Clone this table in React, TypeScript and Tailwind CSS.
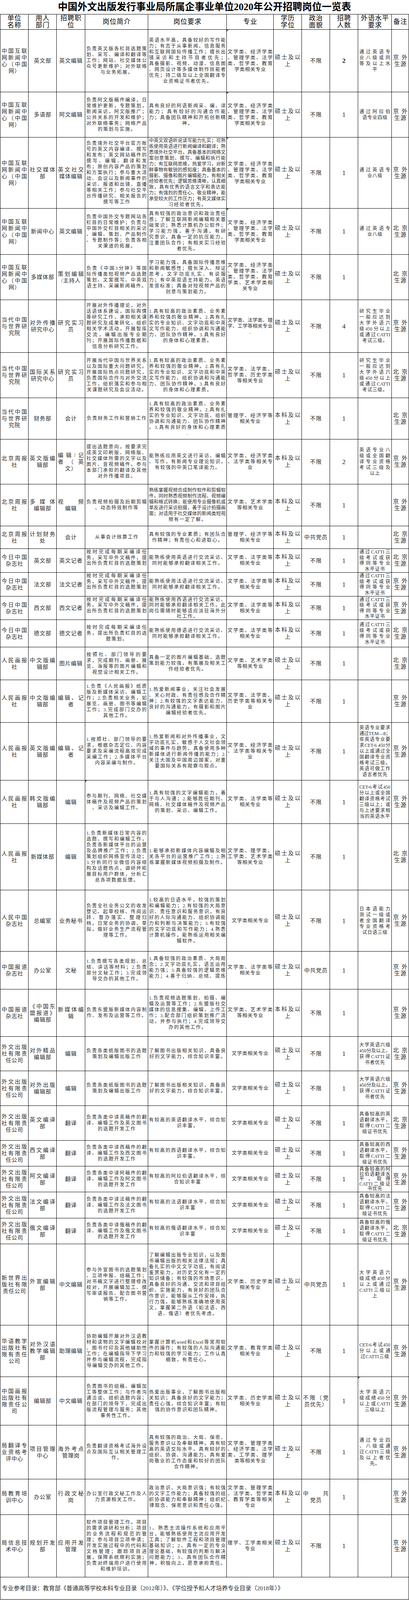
import React from "react";

// The page is photographed in a 4096px-tall window, so every height below is the
// reference height times 4096/4384.
type Col = { w: string; size: string; lh: number; gap: string; pad: string };

const cols: Col[] = [
  { w: "w-[72px]", size: "text-[14px]", lh: 17, gap: "gap-[1px]", pad: "px-[3px]" }, // 单位名称
  { w: "w-[72px]", size: "text-[14px]", lh: 17, gap: "gap-[1px]", pad: "px-[3px]" }, // 用人部门
  { w: "w-[73px]", size: "text-[14px]", lh: 17, gap: "gap-[1px]", pad: "px-[3px]" }, // 招聘职位
  { w: "w-[161px]", size: "text-[12px]", lh: 15, gap: "gap-[2px]", pad: "px-[3px]" }, // 岗位简介
  { w: "w-[201px]", size: "text-[12px]", lh: 15, gap: "gap-[2px]", pad: "px-[2px]" }, // 岗位要求
  { w: "w-[120px]", size: "text-[12.5px]", lh: 15, gap: "gap-[1px]", pad: "px-[2px]" }, // 专业
  { w: "w-[72px]", size: "text-[14px]", lh: 18, gap: "gap-[1px]", pad: "px-[3px]" }, // 学历学位
  { w: "w-[72px]", size: "text-[14px]", lh: 17, gap: "gap-[1px]", pad: "px-[3px]" }, // 政治面貌
  { w: "w-[72px]", size: "text-[17px]", lh: 17, gap: "gap-[1px]", pad: "px-[3px]" }, // 招聘人数
  { w: "w-[86px]", size: "text-[12px]", lh: 15, gap: "gap-[1px]", pad: "px-[3px]" }, // 外语水平要求
  { w: "flex-1", size: "text-[15px]", lh: 17, gap: "gap-[1px]", pad: "px-[3px]" }, // 备注
];

const headers = ["单位|名称", "用人|部门", "招聘职|位", "岗位简介", "岗位要求", "专业", "学历|学位", "政治|面貌", "招聘|人数", "外语水平|要求", "备注"];

const UNIT_CN = "中国互联|网新闻中|心（中国|网）";
const UNIT_DD = "当代中国|与世界研|究院";
const UNIT_BJ = "北京周报|社";
const UNIT_JR = "今日中国|杂志社";
const UNIT_RM = "人民画报|社";
const UNIT_BD = "中国报道|杂志社";
const UNIT_WW = "外文出版|社有限责|任公司";
const MAJ_CN = "文学类、经济学类|、管理学类、法学|类、哲学类、教育|学类相关专业";
const MAJ_FX = "文学类、法学类等|相关专业";
const SS = "硕士及以|上";
const BK = "本科及以|上";
const JW = "京外|生源";
const BJ = "北京|生源";
const BX = "不限";
const DY = "中共党员";
const REQ_DD =
  "1.具有较高的政治素质、业务素|养和较强的敬业精神。2.具有扎|实的专业知识、文字功底和中英|文写作能力、组织协调和沟通能|力、团队协作精神。3.具有良好|的身体和心理素质。";
const LANG_DD = "研究生毕业|一般应达到|大学外语六|级450分以上|或通过CATTI|考试三级。";
const INTRO_JR = "按时完成每期采编译任|务，采写中外文稿件，提|出所负责栏目的选题策划|.";
const LANG_JR = "通过CATTI三|级考试或获|得同等专业|水平证书";
const INTRO_WW = "负责各类纸版图书的选题|策划及编辑出版工作";
const REQ_WW = "了解图书出版相关知识，具备良|好的文字能力，综合知识丰富。";
const LANG_WW = "大学英语六级|450分及以上，|获得CATTI证|书者优先";
const MAJ_WX = "文学类相关专业";

type Row = { h: string; c: string[]; mark?: number; bold?: boolean };

const rows: Row[] = [
  {
    h: "h-[160px]",
    bold: true,
    mark: 5,
    c: [
      UNIT_CN,
      "英文部",
      "英文编辑",
      "负责英文版各栏目选题策|划、采写、编译和翻译等|工作；网站、社交媒体公|众号更新维护；对外联络|与业务拓展。",
      "英语水平高，具备较好的写作能|力；有志于从事新闻、信息服务|和互联网国际传播工作；擅长出|镜采访和主持节目者优先；|具备摄影、视频、动漫、信息图|、网页设计等多媒体制作技能者|优先；持二级及以上全国翻译专|业资格证书者优先。",
      MAJ_CN, SS, BX, "2",
      "通过英语专|业八级或同|等及以上水|平",
      JW,
    ],
  },
  {
    h: "h-[116px]",
    mark: 5,
    c: [
      UNIT_CN,
      "多语部",
      "阿文编辑",
      "负责阿文版稿件编译，日|常维护更新，专题策划，|新闻采访，阿文版推广；|公共关系的开发和维护；|对外联络事务；网络产品|的策划与实施。",
      "具有良好的阿语新闻采、编、译|能力；具有较好的沟通合作能|力；具备团队精神和开拓创新精|神。",
      MAJ_CN, SS, BX, "1",
      "通过阿拉伯|语专业四级",
      JW,
    ],
  },
  {
    h: "h-[182px]",
    mark: 5,
    c: [
      UNIT_CN,
      "社交媒体|部",
      "英文社交|媒体编辑",
      "负责境外社交平台官方账|号的英文内容编译、撰写|和发布；英文网站稿件的|撰写、编辑、翻译和发|布；原创内容产品的策划|和方案执行；参与重大活|动、会议以及新闻事件的|采访、报道和出镜、直播|等相关工作；参与社交平|台传播研究、相关报告的|撰写等工作",
      "中英文双语听说读写能力扎实；可熟|练使用英语进行新闻编译和翻译；熟|悉境外社交平台，具备基本的网络文|案创意策划、撰写、编辑和执行能|力；有互联网思维，热爱学习，对新|鲜事物有敏锐的感知度；具备基本的|摄影、摄像和图片编辑能力，有相关|经验者优先；逻辑思维清晰，认真细|致，具有优秀的语言文字和表达能|力；有强烈的责任心、敬业精神，能|承受较大的工作压力；有英文媒体实|习经验者优先。",
      MAJ_CN, SS, BX, "1",
      "通过英语专|业八级",
      JW,
    ],
  },
  {
    h: "h-[118px]",
    mark: 5,
    c: [
      UNIT_CN,
      "新闻中心",
      "英文编辑",
      "负责中国外交专题网站各|栏目的日常维护；负责与|中国外交栏目相关的采访|、编辑、策划、产品制作|、专题制作等；负责各相|关渠道的拓展。",
      "具有较强的政治意识和政治责任|感；了解互联网新闻编辑相关基|础常识；熟悉计算机办公软件；|学习能力强，善于沟通，有研|究意识，具备一定的抗压能力，|注重团队合作；有相关实习经验|者优先。",
      MAJ_CN, SS, BX, "1",
      "通过英语专|业八级",
      BJ,
    ],
  },
  {
    h: "h-[116px]",
    c: [
      UNIT_CN,
      "多媒体部",
      "策划编辑|/主持人",
      "负责《中国3分钟》等国|际传播类短视频产品选题|策划、文案撰写、中英双|语主持、采编新闻稿件。",
      "学习能力强，具备国际传播思维|和新闻敏感性；擅长深入、辩证|思考，文字功底扎实、有说服|力；有中英双语主持能力，英语|发音标准；具备对短视频产品的|创意与策划能力。",
      "文学类、经济学类|、管理学类、法学|类、哲学类、教育|学类、艺术学类相|关专业",
      SS, BX, "1", "", BJ,
    ],
  },
  {
    h: "h-[135px]",
    c: [
      UNIT_DD,
      "对外传播|研究中心",
      "研究实习|员",
      "开展对外传播理论，对外|话语体系建设，国际舆情|等研究工作，承担相关课|题研究及成果转化，组织|相关学术活动，开展智库|交流，编辑出版专业期|刊；开展国际传播数据和|信息分析研究工作。",
      REQ_DD,
      "文学类、法学类、理|学、工学等相关专业|.",
      SS, BX, "4", LANG_DD, JW,
    ],
  },
  {
    h: "h-[116px]",
    c: [
      UNIT_DD,
      "国际关系|研究中心",
      "研究实习|员",
      "开展当代中国与世界关系|以及国际重大问题研究。|开展国际热点问题研究，|负责国际合作与对外交流|工作，组织落实和参与相|关课题研究及会议活动。",
      REQ_DD,
      "文学类、法学类、|哲学类、历史学类|等相关专业",
      SS, BX, "1", LANG_DD, BJ,
    ],
  },
  {
    h: "h-[106px]",
    c: [
      UNIT_DD,
      "财务部",
      "会计",
      "负责财务工作和营销工作",
      "1.具有较高的政治素质、业务素|养和较强的敬业精神。2.具有扎|实的专业知识、文字功底、组织|协调和沟通能力、团队协作精神|。3.具有良好的身体和心理素质|.",
      "管理学、经济学等|相关专业",
      BK, BX, "1", "", BJ,
    ],
  },
  {
    h: "h-[115px]",
    c: [
      UNIT_BJ,
      "英文版编|辑部",
      "编辑/记|者（英|文）",
      "提出选题意向，按要求完|成英文印刷版、网络版、|社交媒体所需的文字以及|图片、音视频稿件。参与|本部门承担的翻译及其他|对外传播项目。",
      "能熟练应用英文进行采访、编辑|、写作，有新闻专业理论知识，|有较强的中英口笔译能力。",
      "文学类、经济学类|、法学类等相关专|业",
      BK, BX, "2",
      "英语专业八|级或全国翻|译专业资格|考试三级及|以上",
      JW,
    ],
  },
  {
    h: "h-[107px]",
    c: [
      UNIT_BJ,
      "多媒体|编辑部",
      "视频|编辑",
      "负责视频拍摄及后期剪辑|、动态特效制作等",
      "熟练掌握视频合成制作软件和剪辑软|件，同时熟悉视频制作流程、视频编|辑和格式转换；能使用专业摄像机或|单反进行采访拍摄，善于设计拍摄画|面；对适用于社交媒体的新闻类短视|频有一定了解。",
      "文学类、艺术学类|等相关专业",
      BK, BX, "1", "", JW,
    ],
  },
  {
    h: "h-[58px]",
    c: [
      UNIT_BJ,
      "计划财务|处",
      "会计",
      "从事会计核算工作",
      "具有较强的专业素质；有团队合|作精神；有责任心和进取心。",
      "管理学、经济学等|相关专业",
      BK, DY, "1", "", BJ,
    ],
  },
  {
    h: "h-[61px]",
    c: [UNIT_JR, "英文部", "英文记者", INTRO_JR, "能熟练使用英语进行交流采访、|同时能够承担翻译相关工作。", MAJ_FX, BK, BX, "1", LANG_JR, BJ],
  },
  {
    h: "h-[61px]",
    c: [UNIT_JR, "法文部", "法文记者", INTRO_JR, "能熟练使用法语进行交流采访、|同时能够承担翻译相关工作。", MAJ_FX, BK, BX, "1", LANG_JR, JW],
  },
  {
    h: "h-[60px]",
    c: [
      UNIT_JR, "西文部", "西文记者", INTRO_JR,
      "能熟练使用西语进行交流采访、|同时能够承担翻译相关工作。此|岗位需随时能够适应派驻海外分|社工作。",
      MAJ_FX, BK, BX, "1", LANG_JR, JW,
    ],
  },
  {
    h: "h-[70px]",
    c: [
      UNIT_JR, "德文部", "德文记者",
      "按时完成每期采编译任|务，提出所负责栏目的选|题策划。",
      "能熟练使用德语进行交流采访、|同时能够承担翻译相关工作。",
      MAJ_FX, BK, BX, "1", LANG_JR, BJ,
    ],
  },
  {
    h: "h-[84px]",
    c: [
      UNIT_RM, "中文版编|辑部", "图片编辑",
      "按照社、部门领导的要|求，完成期刊、画册、展|览、海报等的图片编辑和|视觉设计相关工作。",
      "具备一定的图片编辑基础，选题|策划能力较强，有策展及相关工|作经验者优先。",
      "文学类、艺术学类|等相关专业",
      SS, BX, "1", "", BJ,
    ],
  },
  {
    h: "h-[109px]",
    c: [
      UNIT_RM, "中文版编|辑部", "编辑、记|者",
      "1.负责《人民画报》纸质|版及新媒体采访、编辑工|作；2.负责相关业务，如|展览、画册、图书等编辑|工作；3.完成部门交办的|其他工作。",
      "1.热爱新闻事业，关注社会发展|、关心时政、有责任感及合作精|神；2.有较强的文字表达能力、|良好的沟通能力，有摄影和图片|编辑经验者优先。",
      "文学类、法学类、|历史学类等相关专|业",
      SS, BX, "1", "", JW,
    ],
  },
  {
    h: "h-[148px]",
    c: [
      UNIT_RM, "英文版编|辑部", "编辑、记|者",
      "1.按照社、部门领导的要|求，根据杂志定位、内容|要求及采编流程高效完成|采编工作；2.多媒体平台|内容采编与制作。",
      "1.热爱新闻和对外传播事业，文|字功底扎实，敏感于人文社会领|域的事件与趋势。具备使用多种|新媒体进行新闻传播的能力；2.|关注大国及中国周边国家，对重|要国际关系有观察与观点。",
      "文学类、经济学类|、法学类等相关专|业",
      SS, BX, "1",
      "英语专业要求|通过TEM—8；|非英语专业要|求CET-6 450分|以上或通过全|国翻译专业资|格考试三级。|英语可做工作|语言者优先",
      JW,
    ],
  },
  {
    h: "h-[111px]",
    mark: 3,
    c: [
      UNIT_RM, "韩文版编|辑部", "编辑",
      "参与期刊、网络、社交媒|体稿件及视频产品的策划|、采访及编辑工作。",
      "1.具有较强的文字编辑能力，善|于与人沟通；2.能够胜任期刊、|网络、社交媒体稿件及视频产品|的策划、采访、编辑工作。",
      MAJ_FX, SS, BX, "1",
      "CET-6考试450|分以上或全国|翻译资格考试|三级以上；或|与上述要求相|当的英语水平",
      JW,
    ],
  },
  {
    h: "h-[170px]",
    c: [
      UNIT_RM, "新媒体部", "编辑",
      "1.负责新媒体日常内容的|选题、撰写和编辑工作，|负责各新媒体平台的运营|及品牌推广工作；2.负责|策划组织网络宣传活动；|3.分析同行业微信内容结|构及话题热点，调研并拓|展目标用户群体，分析汇|总各项数据反馈。",
      "1.能够承担新媒体内容编辑及相|关各平台的运营推广工作；2.熟|练掌握新媒体视频拍摄及制作。",
      "文学类、理学类、|工学类、艺术学类|等相关专业",
      SS, BX, "1", "", BJ,
    ],
  },
  {
    h: "h-[157px]",
    c: [
      "人民中国|杂志社", "总编室", "业务秘书",
      "负责全社业务公文的收发|登记、起草校核、传阅运|转、督办落实、整理归|档，日常业务的协调、草|拟，做好业务生产流程管|理等工作。",
      "1.较高的日语水平，较强的策划|和编辑能力；2.有较强的大局意|识、责任意识和服务意识，有良|好的人际沟通能力、组织协调能|力和判断与决策能力；3.有较强|的文字功底和写作能力；4.熟悉|计算机操作，能熟练运用相关编|辑软件。",
      MAJ_WX, SS, BX, "1",
      "日本语能力|测试一级或|者全国翻译|专业资格考|试日语三级",
      JW,
    ],
  },
  {
    h: "h-[97px]",
    c: [
      UNIT_BD, "办公室", "文秘",
      "1.负责撰写各类规划、总|结、讲话等材料；2.负责|部分文秘工作；3.完成领|导交办的其他工作。",
      "1.具备较强的政治素质、大局观|念；2.文字功底扎实，语言运用|能力强；3.具备较强的逻辑思维|能力；4.善于归纳、总结、提炼|.",
      MAJ_FX, SS, DY, "1", "", JW,
    ],
  },
  {
    h: "h-[121px]",
    c: [
      UNIT_BD, "《中国东|盟报道》|编辑部", "新媒体编|辑",
      "负责东盟版新媒体内容制|作、发布及运营等工作。",
      "1.负责视频选题策划、拍摄、编|辑及运营等工作；2.东盟版社交|媒体的信息搜集、编辑、上传工|作；3.配合部门组织策划推广活|动，并参与执行；4.完成领导交|办的其他工作。",
      "文学类、艺术学类|等相关专业",
      BK, BX, "1", "", JW,
    ],
  },
  { h: "h-[88px]", c: [UNIT_WW, "对外精品|编辑部", "编辑", INTRO_WW, REQ_WW, MAJ_WX, SS, BX, "1", LANG_WW, BJ] },
  { h: "h-[89px]", c: [UNIT_WW, "对外出版|编辑部", "编辑", INTRO_WW, REQ_WW, MAJ_WX, SS, BX, "1", LANG_WW, JW] },
  {
    h: "h-[89px]",
    c: [
      UNIT_WW, "英文编译|部", "翻译",
      "负责各类中译英稿件的翻|译、编辑工作及英文图书|的选题开发工作",
      "有较高的英语翻译水平，综合知|识丰富。",
      MAJ_WX, SS, BX, "1",
      "具备较高的英|语翻译水平，|取得CATTI二|级证书优先",
      BJ,
    ],
  },
  {
    h: "h-[66px]",
    c: [
      UNIT_WW, "西文编译|部", "翻译",
      "负责各类中译西稿件的翻|译、编辑工作及西文图书|的选题开发工作",
      "有较高的西语翻译水平，综合知|识丰富。",
      MAJ_WX, SS, BX, "1",
      "具备较高的西|语翻译水平，|取得CATTI二|级证书优先",
      JW,
    ],
  },
  {
    h: "h-[66px]",
    c: [
      UNIT_WW, "阿文编译|部", "翻译",
      "负责各类中译阿稿件的翻|译、编辑工作及阿文图书|的选题开发工作",
      "有较高的阿拉伯语翻译水平，综|合知识丰富",
      MAJ_WX, SS, BX, "1",
      "具备较高的阿|拉伯语翻译水|平，取得|CATTI二级证|书优先",
      JW,
    ],
  },
  {
    h: "h-[67px]",
    c: [
      UNIT_WW, "法文编译|部", "翻译",
      "负责各类中译法稿件的翻|译、编辑工作及法文图书|的选题开发工作",
      "有较高的法语翻译水平，综合知|识丰富",
      MAJ_WX, SS, BX, "1",
      "具备较高的法|语翻译水平，|取得CATTI二|级证书优先",
      JW,
    ],
  },
  {
    h: "h-[66px]",
    c: [
      UNIT_WW, "俄文编译|部", "翻译",
      "负责各类中译俄稿件的翻|译、编辑工作及俄文图书|的选题开发工作",
      "有较高的俄语翻译水平，综合知|识丰富",
      MAJ_WX, SS, BX, "1",
      "具备较高的俄|语翻译水平，|取得CATTI二|级证书优先",
      BJ,
    ],
  },
  {
    h: "h-[208px]",
    c: [
      "新世界出|版社有限|责任公司", "外宣编辑|部", "中文编辑",
      "参与外宣图书的选题策划|、立项申报、组稿工作；|对书稿文字进行整理修改|校对，开展编辑加工、撰|写审读报告、配合图书营|销等工作。",
      "了解编辑出版专业知识，以及图|书编辑出版的相关法律法规；具|备扎实的中文文字功底，有阅读|鉴赏能力，对历史文化有一定的|知识储备；有较强的市场意识，|具备良好的沟通、交流和项目组|织、实施能力，有良好的团队合|作意识，能够服从工作安排，执|行力强。能够熟练准确地使用英|文，掌握第二外语（如法语、西|语、俄语）者优先考虑。",
      "文学类、历史学类|相关专业",
      SS, DY, "1",
      "大学英语六|级成绩450分|以上或通过|CATTI三级以|上",
      JW,
    ],
  },
  {
    h: "h-[132px]",
    c: [
      "华语教学|出版社有|限有责任|公司", "对外汉语|教学编辑|部", "助理编辑",
      "协助编辑开展对外汉语教|材和读物的文字编辑校对|、图书付印及其他辅助性|工作；在编辑指导下学习|并参与编辑流程，完成指|导编辑交办的其他工作。",
      "掌握计算机word和Excel等常用软|件的操作；有较强的人际沟通能|力和较强的学习能力；工作认真|细致，有责任心。",
      "文学类、教育学类|相关专业",
      SS, BX, "1",
      "CET-6考试450|分以上或通|过CATTI三级",
      JW,
    ],
  },
  {
    h: "h-[124px]",
    mark: 9,
    c: [
      "中国画报|出版社有|限责任公|司", "编辑部", "中文编辑",
      "负责图书的组稿、编辑加|工等整体工作；与作者沟|通洽谈、组织选题内容；|在部门的领导下，完成出|版流程管理与服务；其他|事务性工作。",
      "热爱出版事业，了解图书出版相|关知识；具备良好的文字能力；|责任心强，综合知识丰富；有较|强的协作意识和团队精神。",
      "文学类、历史学类|相关专业",
      SS, "不限（党|员优先）", "1",
      "大学英语六|级成绩450分|以上或CATTI|三级以上",
      JW,
    ],
  },
  {
    h: "h-[138px]",
    c: [
      "局翻译专|业资格考|评中心", "项目管理|中心", "海外考点|管理岗",
      "负责翻译资格考试海外设|点及国际互认相关管理工|作。",
      "具有较强的政治、大局、保密、|服务意识以及奉献精神。具有较|高的英语交际水平。具有较好的|组织、协调、沟通能力。具有爱|岗敬业的工作态度和较好的团队|合作精神。",
      "文学类、管理学类|、经济学类、法学|类、工学类、理学|类等相关专业",
      SS, BX, "1",
      "通过专业四|、八级或通|过CATTI三级|及以上者优|先。",
      JW,
    ],
  },
  {
    h: "h-[91px]",
    c: [
      "局教育培|训中心", "办公室", "行政文秘|岗",
      "办公室行政文秘工作及人|力资源相关工作。",
      "政治意识、大局意识强；有较强|的文字工作能力；具备较强的组|织协调能力和奉献精神；组织纪|律观念、保密意识和责任心强。",
      "文学类、管理学类|、法学类、哲学类|、教育学类等相关|专业",
      BK, "中共|党员", "1", "", JW,
    ],
  },
  {
    h: "h-[160px]",
    c: [
      "局信息技|术中心", "规划开发|部", "应用开发|管理",
      "软件项目管理工作。项目|的需求调研和分析；项目|的业务流程和规范的管|理；参与项目立项申请；|开发实施过程中的代码和|文档管理；跟踪项目进|展，保障系统顺利实施；|负责对终端用户进行使用|和维护培训。",
      "1、熟悉主流操作系统和应用平|台，能够熟练使用主流应用开发|工具；了解软件工程和项目管理|基础知识；2、具有一定的专业|理论基础，有较强的判断与解决|问题能力；3、具有团队合作精|神，积极向上，愿意承担责任。",
      "理学、工学类相关|专业",
      SS, BX, "1", "", JW,
    ],
  },
];

// one line of "distributed" Excel text: full lines spread edge to edge, last line centred
function Line({ text, last, gap, center }: { text: string; last: boolean; gap: string; center?: boolean }) {
  const tokens = text.match(/[A-Za-z0-9.\-— ]+|./gu) ?? [];
  return (
    <div className={`flex whitespace-pre ${last || center ? `justify-center ${gap}` : "justify-between"}`}>
      {tokens.map((t, i) => (
        <span key={i}>{t}</span>
      ))}
    </div>
  );
}

function Cell({ text, col, hp, mark, bold, center }: { text: string; col: Col; hp: number; mark?: boolean; bold?: boolean; center?: boolean }) {
  const lines = text ? text.split("|") : [];
  const lh = lines.length ? Math.min(col.lh, (hp - 3) / lines.length) : col.lh;
  return (
    <div
      className={`relative flex shrink-0 flex-col justify-center border-r border-black ${col.pad} ${col.w} ${col.size} ${bold ? "font-bold" : ""}`}
      style={{ lineHeight: `${lh}px` }}
    >
      {mark && (
        <span className="absolute left-0 top-0 h-0 w-0 border-r-[5px] border-t-[5px] border-r-transparent border-t-[#2e8b2e]" />
      )}
      {lines.map((ln, i) => (
        <Line key={i} text={ln} last={i === lines.length - 1} gap={col.gap} center={center} />
      ))}
    </div>
  );
}

export default function App() {
  return (
    <div className="w-[1046px] bg-white font-['Liberation_Serif','Noto_Sans_CJK_SC',serif] text-[#2a2a2a]">
      <div className="flex h-[37px] items-center justify-center border-b border-black text-[25px] font-bold text-black">
        中国外文出版发行事业局所属企事业单位2020年公开招聘岗位一览表
      </div>
      <div className="border-l border-black">
        <div className="flex h-[39px] border-b border-black text-black">
          {headers.map((t, i) => (
            <Cell key={i} text={t} col={{ ...cols[i], size: "text-[17px]", lh: 18, gap: "gap-[1px]" }} hp={39} center />
          ))}
        </div>
        {rows.map((r, ri) => {
          const hp = parseInt(r.h.slice(3));
          return (
            <div key={ri} className={`flex border-b border-black ${r.h}`}>
              {r.c.map((t, ci) => (
                <Cell key={ci} text={t} col={cols[ci]} hp={hp} mark={r.mark === ci} bold={ci === 8 && r.bold} />
              ))}
            </div>
          );
        })}
        <div className="flex h-[57px] items-center border-b border-r border-black pl-[4px] text-[15px]">
          专业参考目录：教育部《普通高等学校本科专业目录（2012年）》、《学位授予和人才培养专业目录（2018年）》
        </div>
      </div>
    </div>
  );
}
